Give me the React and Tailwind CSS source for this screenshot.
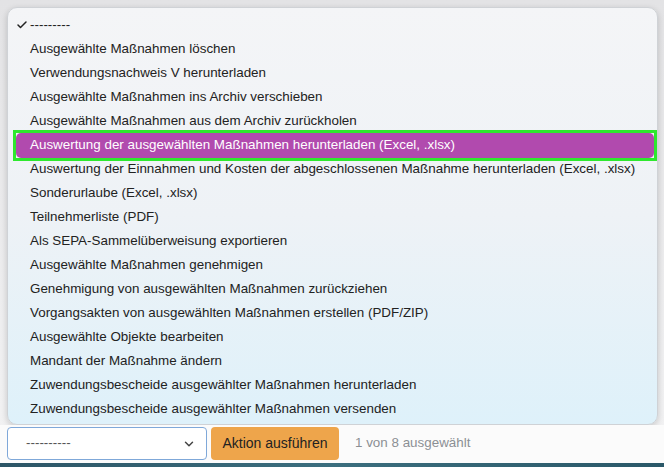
import { Check, ChevronDown } from 'lucide-react';

const options = [
    '---------',
    'Ausgewählte Maßnahmen löschen',
    'Verwendungsnachweis V herunterladen',
    'Ausgewählte Maßnahmen ins Archiv verschieben',
    'Ausgewählte Maßnahmen aus dem Archiv zurückholen',
    'Auswertung der ausgewählten Maßnahmen herunterladen (Excel, .xlsx)',
    'Auswertung der Einnahmen und Kosten der abgeschlossenen Maßnahme herunterladen (Excel, .xlsx)',
    'Sonderurlaube (Excel, .xlsx)',
    'Teilnehmerliste (PDF)',
    'Als SEPA-Sammelüberweisung exportieren',
    'Ausgewählte Maßnahmen genehmigen',
    'Genehmigung von ausgewählten Maßnahmen zurückziehen',
    'Vorgangsakten von ausgewählten Maßnahmen erstellen (PDF/ZIP)',
    'Ausgewählte Objekte bearbeiten',
    'Mandant der Maßnahme ändern',
    'Zuwendungsbescheide ausgewählter Maßnahmen herunterladen',
    'Zuwendungsbescheide ausgewählter Maßnahmen versenden',
];

const HIGHLIGHTED = 5;

export default function App() {
    return (
        <div
            className="flex h-[467px] w-[664px] flex-col overflow-hidden bg-gradient-to-b from-[#e3e3e5] to-[#f3f3f4] text-[13.4px] text-[#222]"
            style={{ fontFamily: '"Liberation Sans", Arial, sans-serif' }}
        >
            <div className="px-[7px] pt-[7px]">
                <div className="h-[418px] w-[651px] rounded-[10px] border border-[#cfd2d6] bg-gradient-to-b from-[#f4f5f7] via-[#eef2f6] to-[#def1fa] py-[5px] shadow-[0_2px_6px_rgba(0,0,0,0.18)]">
                    {options.map((label, i) =>
                        i === HIGHLIGHTED ? (
                            <div key={i} className="flex h-[24px] items-center">
                                <div className="ml-[5px] flex h-[31px] w-[645px] border-[3px] border-[#2ee82e]">
                                    <div className="flex h-full w-full items-center rounded-[5px] bg-[#b14aae] pl-[14px] text-white">
                                        {label}
                                    </div>
                                </div>
                            </div>
                        ) : (
                            <div key={i} className="flex h-[24px] items-center">
                                <span className="flex w-[22px] justify-end pr-[2px]">
                                    {i === 0 && <Check size={12} strokeWidth={3} />}
                                </span>
                                <span>{label}</span>
                            </div>
                        )
                    )}
                </div>
            </div>

            <div className="flex items-center gap-[4px] bg-[#fbfbfb] px-[7px] pt-[2px] pb-[3px]">
                <div className="flex h-[33px] w-[200px] items-center justify-between rounded-[4px] border border-[#7fa8d9] bg-white pl-[18px] pr-[10px] text-[#555]">
                    <span>----------</span>
                    <ChevronDown size={14} strokeWidth={2.5} className="text-[#444]" />
                </div>
                <div className="flex h-[33px] w-[128px] items-center justify-center rounded-[4px] bg-[#eea54b] text-[14px] text-[#222]">
                    Aktion ausführen
                </div>
                <span className="ml-[12px] text-[#8b8f94]">1 von 8 ausgewählt</span>
            </div>
            <div className="flex-1 bg-gradient-to-r from-[#2c5566] via-[#3b6e7e] to-[#2a5868]" />
        </div>
    );
}
